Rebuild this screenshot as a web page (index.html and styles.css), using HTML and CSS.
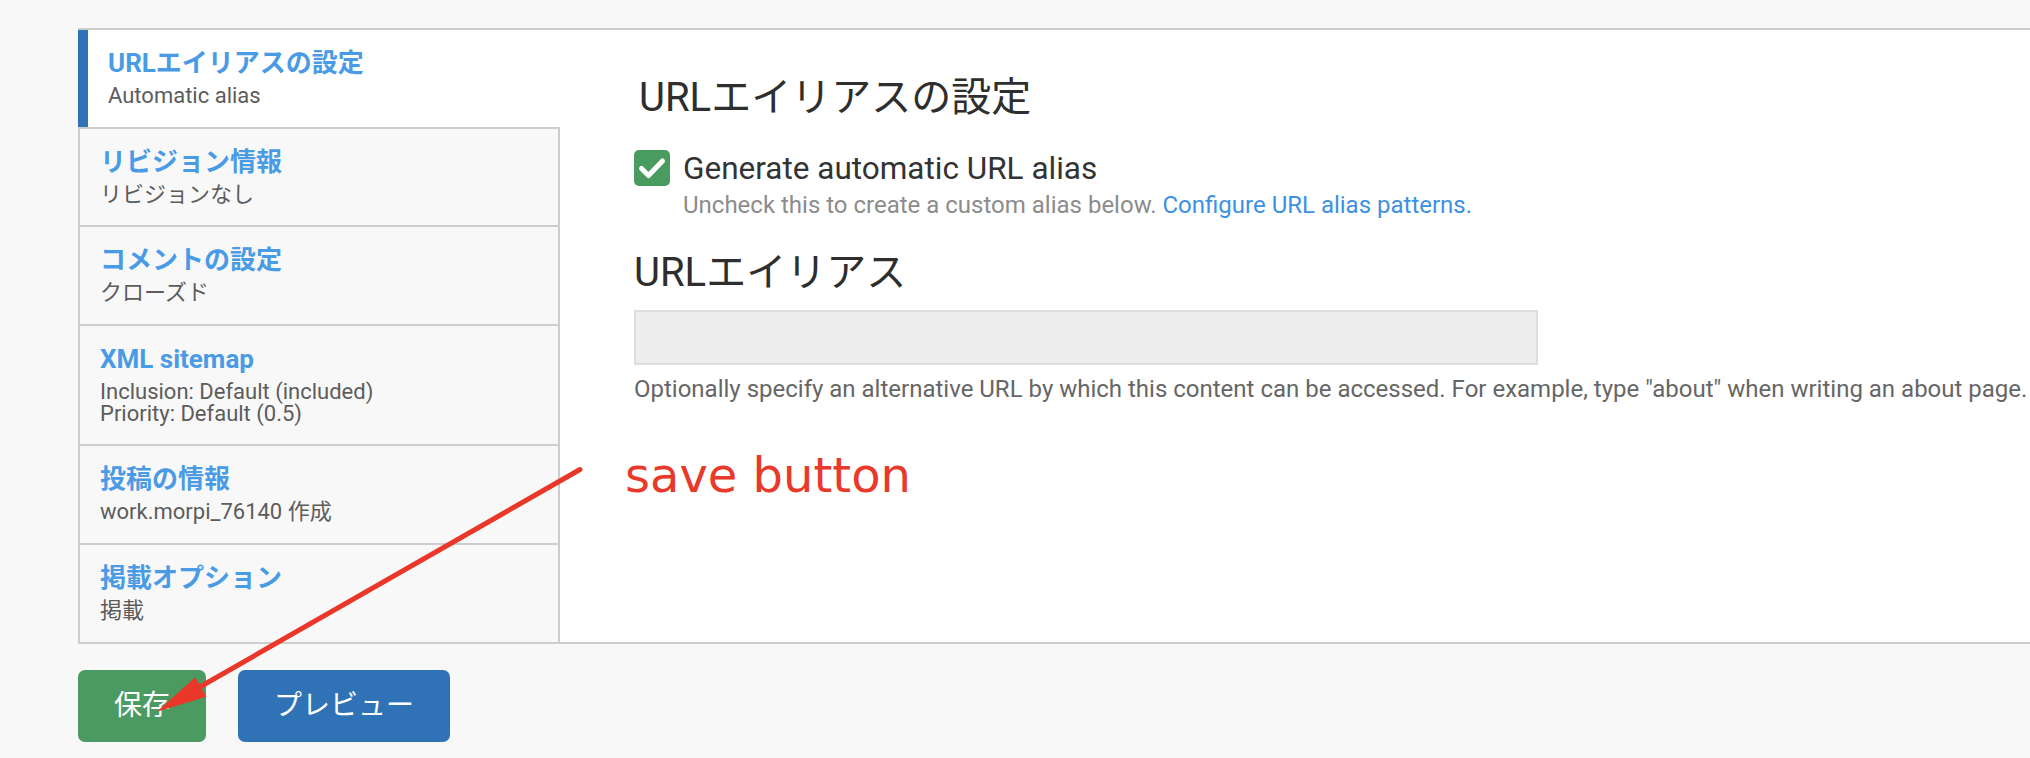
FILE: index.html
```html
<!DOCTYPE html>
<html lang="ja">
<head>
<meta charset="utf-8">
<title>URLエイリアスの設定</title>
<link rel="stylesheet" href="styles.css">
</head>
<body>
<div class="page">
  <div class="vtabs">
    <ul class="vtabs-menu">
      <li class="vtab is-selected">
        <a class="vtab-title">URLエイリアスの設定</a>
        <span class="vtab-summary">Automatic alias</span>
      </li>
      <li class="vtab">
        <a class="vtab-title">リビジョン情報</a>
        <span class="vtab-summary">リビジョンなし</span>
      </li>
      <li class="vtab">
        <a class="vtab-title">コメントの設定</a>
        <span class="vtab-summary">クローズド</span>
      </li>
      <li class="vtab">
        <a class="vtab-title">XML sitemap</a>
        <span class="vtab-summary">Inclusion: Default (included)<br>Priority: Default (0.5)</span>
      </li>
      <li class="vtab">
        <a class="vtab-title">投稿の情報</a>
        <span class="vtab-summary">work.morpi_76140 作成</span>
      </li>
      <li class="vtab">
        <a class="vtab-title">掲載オプション</a>
        <span class="vtab-summary">掲載</span>
      </li>
    </ul>
    <div class="vtabs-pane">
      <h2 class="pane-title">URLエイリアスの設定</h2>
      <div class="checkbox-row">
        <span class="checkbox">
          <svg viewBox="0 0 36 36" width="36" height="36"><polyline points="7.5,18.5 14.5,25.5 28.5,11" fill="none" stroke="#fff" stroke-width="5" stroke-linecap="round" stroke-linejoin="round"/></svg>
        </span>
        <div class="checkbox-text">
          <span class="checkbox-label">Generate automatic URL alias</span>
          <div class="description">Uncheck this to create a custom alias below. <a class="link">Configure URL alias patterns.</a></div>
        </div>
      </div>
      <span class="field-label">URLエイリアス</span>
      <input class="text-input" type="text" disabled>
      <div class="field-help">Optionally specify an alternative URL by which this content can be accessed. For example, type "about" when writing an about page.</div>
    </div>
  </div>
  <div class="actions">
    <button class="btn btn-save" type="button">保存</button>
    <button class="btn btn-preview" type="button">プレビュー</button>
  </div>
</div>
<div class="annotation">save button</div>
<svg class="arrow" viewBox="0 0 2030 758" width="2030" height="758">
  <line x1="580" y1="469.5" x2="198" y2="688" stroke="#e9382a" stroke-width="5" stroke-linecap="round"/>
  <polygon points="156.7,711.7 195.2,677.2 206.4,696.8" fill="#e9382a"/>
</svg>
</body>
</html>
```

FILE: styles.css
```css
* {
  box-sizing: border-box;
}

html,
body {
  margin: 0;
}

body {
  position: relative;
  width: 2030px;
  height: 758px;
  overflow: hidden;
  background: #f8f8f8;
  font-family: Roboto, "Noto Sans CJK JP", sans-serif;
  color: #333;
}

.page {
  padding: 28px 0 0 78px;
}

.vtabs {
  display: flex;
  border-top: 2px solid #cdcdcd;
  border-bottom: 2px solid #cdcdcd;
  margin-right: -40px;
}

.vtabs-menu {
  list-style: none;
  margin: 0;
  padding: 0;
  width: 482px;
  flex: none;
  display: flex;
  flex-direction: column;
}

.vtab {
  background: #f8f8f8;
  border-left: 2px solid #cdcdcd;
  border-right: 2px solid #cdcdcd;
  border-bottom: 2px solid #cdcdcd;
  padding: 17px 20px 19.6px 20px;
}

.vtab:last-child {
  border-bottom: 0;
}

.vtab.is-selected {
  background: #fff;
  border-left: 0;
  border-right: 0;
  box-shadow: inset 10px 0 0 #2f73b6;
  padding-left: 30px;
}

.vtab-title {
  display: block;
  font-size: 26px;
  line-height: 32px;
  font-weight: 700;
  color: #4a9be6;
  text-decoration: none;
}

.vtab-summary {
  display: block;
  margin-top: 6px;
  font-size: 22px;
  line-height: 22px;
  color: #5c5c5c;
}

.vtabs-pane {
  flex: 1;
  background: #fff;
  padding: 44px 0 0 74px;
}

.pane-title {
  margin: 0;
  padding-left: 5px;
  font-size: 40px;
  line-height: 48px;
  font-weight: 400;
  color: #2e2e2e;
}

.checkbox-row {
  display: flex;
  align-items: flex-start;
  gap: 13px;
  margin-top: 28px;
}

.checkbox {
  flex: none;
  width: 36px;
  height: 36px;
  border-radius: 5px;
  background: #4a9b60;
  display: block;
}

.checkbox svg {
  display: block;
}

.checkbox-label {
  display: block;
  padding-top: 1px;
  font-size: 31.5px;
  line-height: 36px;
  color: #333;
}

.description {
  margin-top: 4px;
  font-size: 24px;
  line-height: 28px;
  color: #8c8c8c;
}

.link {
  color: #3d90e3;
  text-decoration: none;
}

.field-label {
  display: block;
  margin-top: 30px;
  font-size: 40px;
  line-height: 48px;
  color: #2e2e2e;
}

.text-input {
  display: block;
  margin: 13px 0 0;
  width: 904px;
  height: 55px;
  border: 2px solid #dedede;
  border-radius: 0;
  background: #ededed;
  padding: 0;
}

.field-help {
  margin-top: 9.5px;
  font-size: 24px;
  line-height: 28px;
  color: #666;
  white-space: nowrap;
}

.actions {
  display: flex;
  gap: 32px;
  margin-top: 26px;
}

.btn {
  height: 72px;
  padding: 0 36px;
  border: 0;
  border-radius: 7px;
  font-family: Roboto, "Noto Sans CJK JP", sans-serif;
  font-size: 28px;
  line-height: 72px;
  color: #fff;
}

.btn-save {
  background: #4a9a61;
}

.btn-preview {
  background: #2f73b6;
}

.annotation {
  position: absolute;
  left: 625px;
  top: 451px;
  font-family: "DejaVu Sans", sans-serif;
  font-size: 48px;
  line-height: 48px;
  color: #e9392b;
}

.arrow {
  position: absolute;
  left: 0;
  top: 0;
  pointer-events: none;
}
```
